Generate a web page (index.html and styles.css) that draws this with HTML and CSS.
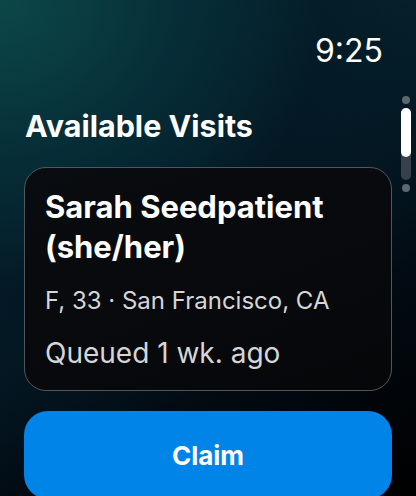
FILE: index.html
```html
<!DOCTYPE html>
<html lang="en">
<head>
<meta charset="utf-8">
<title>Available Visits</title>
<link rel="stylesheet" href="styles.css">
</head>
<body>
<div class="screen">
  <header class="status">
    <span class="time">9:25</span>
  </header>
  <h1 class="title">Available Visits</h1>
  <section class="card">
    <h2 class="name">Sarah Seedpatient (she/her)</h2>
    <p class="meta">F, 33 · San Francisco, CA</p>
    <p class="queued">Queued 1 wk. ago</p>
  </section>
  <button class="claim">Claim</button>
  <div class="scroller" aria-hidden="true">
    <span class="dot"></span>
    <span class="track"><span class="thumb"></span></span>
    <span class="dot"></span>
  </div>
</div>
</body>
</html>
```
FILE: styles.css
```css
* { box-sizing: border-box; }
html, body {
  margin: 0;
  padding: 0;
  width: 416px;
  height: 496px;
  overflow: hidden;
  background: #000;
}
.screen {
  position: relative;
  width: 416px;
  height: 496px;
  overflow: hidden;
  padding: 0 24px;
  font-family: Inter, "Noto Sans", sans-serif;
  color: #fff;
  background:
    radial-gradient(ellipse 120% 90% at 0% 0%, rgba(12, 72, 72, 1) 0%, rgba(6, 46, 56, 0.9) 35%, rgba(3, 20, 32, 0.6) 65%, rgba(0, 0, 0, 0) 100%),
    linear-gradient(150deg, #0a3d40 0%, #04202c 40%, #020a12 70%, #000 100%);
}
.status {
  display: flex;
  justify-content: flex-end;
  padding-top: 33px;
  padding-right: 9px;
}
.time {
  font-size: 32px;
  line-height: 36px;
  font-weight: 400;
}
.title {
  margin: 39px 0 0 1px;
  font-size: 30.5px;
  line-height: 36px;
  font-weight: 700;
}
.card {
  margin-top: 23px;
  border: 1.5px solid #50575b;
  border-radius: 22px;
  background: linear-gradient(160deg, #090c10 0%, #060709 100%);
  padding: 19px 19px 21.5px 20px;
}
.name {
  margin: 0;
  font-size: 31px;
  line-height: 40px;
  font-weight: 700;
}
.meta {
  margin: 20px 0 0;
  font-size: 24px;
  line-height: 28px;
  color: #d4d6d8;
}
.queued {
  margin: 21.5px 0 0;
  font-size: 28px;
  line-height: 32px;
  color: #d4d6d8;
}
.claim {
  display: block;
  width: 100%;
  height: 88px;
  margin-top: 20px;
  border: 0;
  border-radius: 24px;
  background: #0084e8;
  color: #fff;
  font-family: inherit;
  font-size: 26px;
  font-weight: 700;
}
.scroller {
  position: absolute;
  left: 401px;
  top: 96px;
  width: 10px;
  display: flex;
  flex-direction: column;
  align-items: center;
  gap: 4px;
}
.dot {
  width: 8px;
  height: 8px;
  border-radius: 50%;
  background: #5d6770;
}
.track {
  width: 10px;
  height: 72px;
  border-radius: 5px;
  background: #36414b;
  display: flex;
}
.thumb {
  width: 10px;
  height: 49px;
  border-radius: 5px;
  background: #fff;
}
```
